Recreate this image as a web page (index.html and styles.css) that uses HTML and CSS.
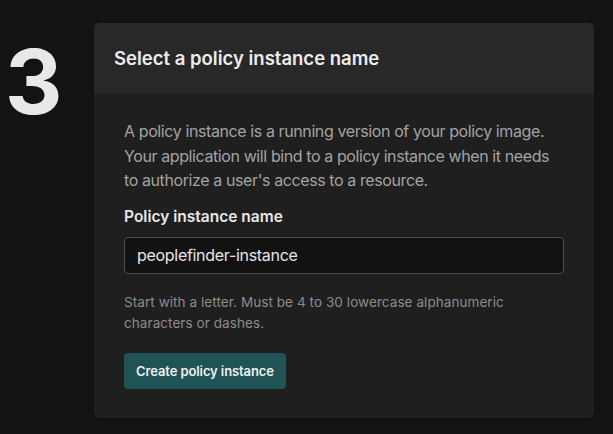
FILE: index.html
```html
<!DOCTYPE html>
<html>
<head>
<meta charset="utf-8">
<link rel="stylesheet" href="styles.css">
</head>
<body>
<div class="step">
  <div class="step-num">3</div>
  <section class="card">
    <header class="card-head">
      <h2>Select a policy instance name</h2>
    </header>
    <div class="card-body">
      <p class="desc">A policy instance is a running version of your policy image. Your application will bind to a policy instance when it needs to authorize a user's access to a resource.</p>
      <label class="label" for="name">Policy instance name</label>
      <input id="name" class="input" type="text" value="peoplefinder-instance">
      <p class="hint">Start with a letter. Must be 4 to 30 lowercase alphanumeric characters or dashes.</p>
      <button class="btn">Create policy instance</button>
    </div>
  </section>
</div>
</body>
</html>
```

FILE: styles.css
```css
html, body {
  margin: 0;
  padding: 0;
  background: #131313;
  font-family: Inter, "Noto Sans", sans-serif;
  color: #e6e6e6;
}
.step {
  display: flex;
  align-items: flex-start;
  padding: 23px 0 0 0;
}
.step-num {
  width: 94px;
  box-sizing: border-box;
  padding-left: 5px;
  font-size: 89px;
  font-weight: 700;
  line-height: 1;
  color: #e8e8e8;
  margin-top: 14px;
}
.card {
  width: 500px;
  height: 395px;
  background: #1f1f1f;
  border-radius: 5px;
  overflow: hidden;
}
.card-head {
  background: #282828;
  height: 70px;
  display: flex;
  align-items: center;
  padding: 0 20px;
}
.card-head h2 {
  margin: 0;
  font-size: 18.5px;
  font-weight: 600;
  color: #ececec;
}
.card-body {
  padding: 26px 30px 0 30px;
}
.desc {
  margin: 0;
  font-size: 16px;
  line-height: 24.5px;
  letter-spacing: -0.4px;
  color: #a3a3a3;
}
.label {
  display: block;
  margin-top: 13px;
  font-size: 15.5px;
  font-weight: 600;
  line-height: 22px;
  color: #e8e8e8;
}
.input {
  display: block;
  box-sizing: border-box;
  width: 440px;
  height: 37px;
  margin-top: 9px;
  padding: 0 12px;
  background: #121212;
  border: 1px solid #4d4d4d;
  border-radius: 4px;
  font-family: inherit;
  font-size: 16px;
  letter-spacing: -0.3px;
  color: #e6e6e6;
  outline: none;
}
.hint {
  margin: 18px 0 0 0;
  font-size: 13.5px;
  line-height: 21px;
  letter-spacing: 0.07px;
  color: #8c8c8c;
}
.btn {
  display: block;
  margin-top: 19px;
  height: 36px;
  padding: 0 12px;
  background: #1f5356;
  border: none;
  border-radius: 4px;
  font-family: inherit;
  font-size: 13px;
  font-weight: 600;
  letter-spacing: -0.1px;
  color: #f0f0f0;
}
```
